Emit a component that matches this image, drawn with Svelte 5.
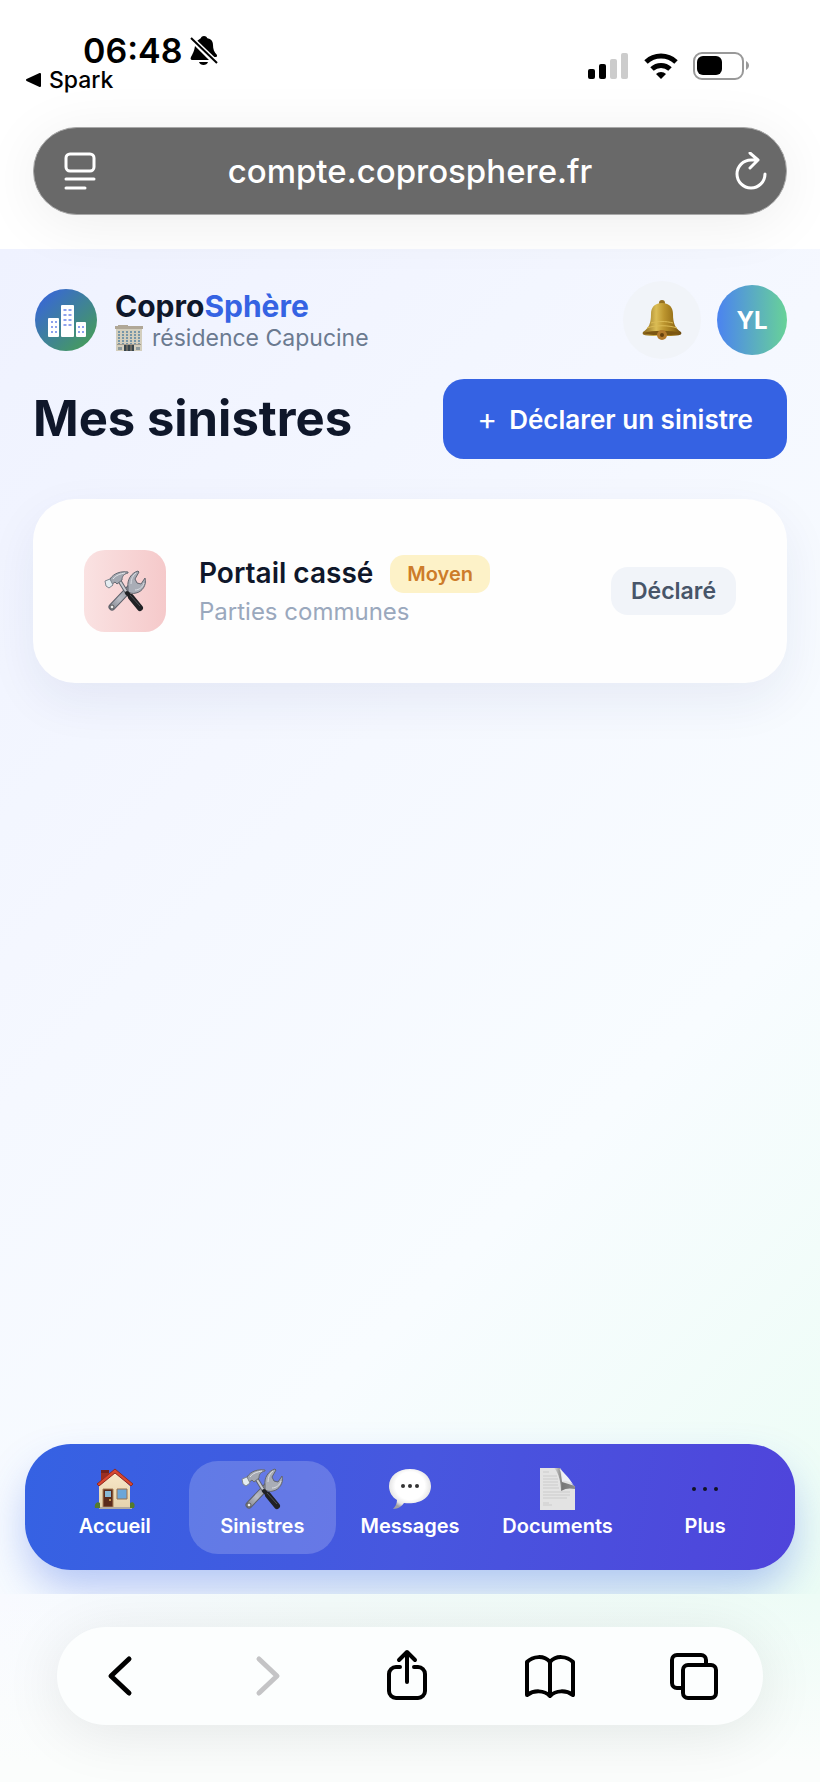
<script lang="ts">
    type Tab = { id: string; label: string };

    const tabs: Tab[] = [
        { id: 'accueil', label: 'Accueil' },
        { id: 'sinistres', label: 'Sinistres' },
        { id: 'messages', label: 'Messages' },
        { id: 'documents', label: 'Documents' },
        { id: 'plus', label: 'Plus' }
    ];

    const sinistres = [
        { titre: 'Portail cassé', lieu: 'Parties communes', gravite: 'Moyen', statut: 'Déclaré' }
    ];

    let active = $state('sinistres');
</script>

{#snippet tools()}
    <svg class="emoji" viewBox="0 0 42 42" aria-hidden="true">
        <!-- wrench -->
        <path d="M8 37 27 17" stroke="#5d606a" stroke-width="7" stroke-linecap="round" />
        <path d="M8 37 27 17" stroke="url(#steel)" stroke-width="5" stroke-linecap="round" />
        <path d="M24 17c-1-7 3-14 10-16l1 1-4 7 2 4 4 1 4-6c2 7-3 14-9 15-3 1-6 0-8-1z" fill="#a9adb6" stroke="#62656e" stroke-width="1" />
        <path d="M27 14c0-5 2-9 5-11M31 20c4 0 8-3 9-7" stroke="#dadde2" stroke-width="1" />
        <circle cx="8" cy="37" r="2" fill="#eee" stroke="#555" />
        <!-- hammer -->
        <path d="m15 10 8 13" stroke="#5f636c" stroke-width="4" />
        <path d="m15 10 8 13" stroke="#c9ccd2" stroke-width="2" />
        <path d="m23 23 3 3" stroke="#202124" stroke-width="4" stroke-linecap="round" />
        <path d="m27 27 9 11" stroke="#202124" stroke-width="6" stroke-linecap="round" />
        <path d="m26 25 10 11" stroke="#4e5054" stroke-width="1" />
        <path d="M6 9c4-6 11-8 18-7v1c-4 1-6 3-6 7l-5 4-2-2-4 3z" fill="#a4a8b1" stroke="#656972" stroke-width="1" />
        <path d="M9 9c3-4 7-5 12-6" stroke="#e4e6ea" stroke-width="1" />
        <path d="m1 11 5-2 3 6-4 3-3-2z" fill="#e4ecf0" stroke="#7e868f" />
    </svg>
{/snippet}

{#snippet tabIcon(id: string)}
    {#if id === 'accueil'}
        <svg class="emoji" viewBox="0 0 42 42" aria-hidden="true">
            <path d="M7 3h8v12H7z" fill="#9b2f22" />
            <path d="M7 2h8v3H7z" fill="#74231c" />
            <path d="M5 18 21 4l15 14v22H5z" fill="url(#wall)" />
            <path d="M3 16 21 1l18 15-2 2L21 5 5 18z" fill="#d9482f" stroke="#912a22" stroke-width="1" />
            <path d="M9 21h10v18H9z" fill="#5b2b1c" stroke="#a87e55" />
            <path d="M11 23h6v6h-6z" fill="#88b9d6" />
            <circle cx="16" cy="32" r="1" fill="#e4b65a" />
            <path d="M23 21h10v10H23z" fill="#6ba6d9" stroke="#98704d" stroke-width="1" />
            <path d="M5 39h33v2H5z" fill="#b2aba0" />
            <path d="M1 40c-1-5 3-7 5-5v5zM36 40v-5c3-2 6 1 4 5z" fill="#557b2d" />
        </svg>
    {:else if id === 'sinistres'}
        {@render tools()}
    {:else if id === 'messages'}
        <svg class="emoji" viewBox="0 0 42 42" aria-hidden="true">
            <path d="M21 1C9 1 0 8 0 18c0 6 3 11 8 14 0 4-2 7-4 9 5 0 9-3 11-6 15 2 27-5 27-17C42 8 33 1 21 1z" fill="url(#bubble)" />
            <g fill="#333">
                <circle cx="14" cy="18" r="2" />
                <circle cx="21" cy="18" r="2" />
                <circle cx="28" cy="18" r="2" />
            </g>
        </svg>
    {:else if id === 'documents'}
        <svg class="emoji" viewBox="0 0 42 42" aria-hidden="true">
            <path d="M3 0h20l15 20v22H3z" fill="#e3e3e3" />
            <path d="M6 4h6M6 8h14M6 11h15M6 14h15M6 17h15M6 20h16M6 24h27M6 27h27M6 30h24M6 35h6M6 37h9" stroke="#cbcbcb" />
            <path d="M17 0h6l2 14 13 4v3c-5-1-9-1-14 2 0-8-2-18-7-23z" fill="url(#fold)" />
            <path d="M22 1c3 3 4 7 3 12 5-1 10 1 13 7C34 12 28 5 22 1z" fill="#eef0f6" />
        </svg>
    {:else}
        <svg class="emoji" viewBox="0 0 42 42" aria-hidden="true">
            <g fill="#101223">
                <circle cx="10" cy="21" r="2" />
                <circle cx="21" cy="21" r="2" />
                <circle cx="32" cy="21" r="2" />
            </g>
        </svg>
    {/if}
{/snippet}

<svg class="defs" width="0" height="0" aria-hidden="true">
    <defs>
        <linearGradient id="steel" x1="0" y1="1" x2="1" y2="0">
            <stop offset="0" stop-color="#8c8f98" />
            <stop offset="0.400" stop-color="#b9bcc4" />
            <stop offset="1" stop-color="#8f929b" />
        </linearGradient>
        <linearGradient id="wall" x1="0" y1="0" x2="0" y2="1">
            <stop offset="0" stop-color="#f8e8c8" />
            <stop offset="1" stop-color="#e5d3ae" />
        </linearGradient>
        <radialGradient id="bubble" cx="0.500" cy="0.420" r="0.580">
            <stop offset="0.600" stop-color="#fff" />
            <stop offset="0.850" stop-color="#e6e6e6" />
            <stop offset="1" stop-color="#a0a0a4" />
        </radialGradient>
        <linearGradient id="fold" x1="0" y1="0" x2="1" y2="0">
            <stop offset="0" stop-color="#dcdcdc" />
            <stop offset="0.400" stop-color="#777" />
            <stop offset="1" stop-color="#8d8d8d" />
        </linearGradient>
        <linearGradient id="gold" x1="0" y1="0" x2="1" y2="0">
            <stop offset="0" stop-color="#87641a" />
            <stop offset="0.350" stop-color="#dbbd55" />
            <stop offset="0.550" stop-color="#bd962f" />
            <stop offset="0.800" stop-color="#987119" />
            <stop offset="1" stop-color="#684710" />
        </linearGradient>
        <linearGradient id="logo" x1="0" y1="0" x2="1" y2="1">
            <stop offset="0.100" stop-color="#3867d6" />
            <stop offset="0.900" stop-color="#469c5b" />
        </linearGradient>
    </defs>
</svg>

<div class="phone">
    <header class="browser-top">
        <div class="status">
            <div class="status-left">
                <div class="clock">
                    <time>06:48</time>
                    <svg width="28" height="30" viewBox="0 0 28 30" role="img" aria-label="Silencieux">
                        <path d="M14 0c-2 0-3 1-3 2L7 5l16 16h3c1 0 1-1 1-2-3-3-4-6-4-10 0-5-3-6-6-7 0-1-1-2-3-2z" />
                        <path d="M5 10c-1 6-2 7-4 11-1 2 0 3 1 3h17zM9 26h9c-1 4-8 4-9 0z" />
                        <path d="m1 2 26 25" fill="none" stroke="#fff" stroke-width="5" />
                        <path d="m1 2 26 25" fill="none" stroke="#000" stroke-width="2" />
                    </svg>
                </div>
                <a class="back-app" href="#spark">
                    <svg width="16" height="16" viewBox="0 0 16 16" aria-hidden="true"><path d="m1 8 13-6v12z" stroke="#000" stroke-width="2" stroke-linejoin="round" /></svg>
                    Spark
                </a>
            </div>
            <div class="status-right">
                <svg width="41" height="26" viewBox="0 0 41 26" role="img" aria-label="Réseau">
                    <rect y="16" width="7" height="10" rx="2" />
                    <rect x="11" y="11" width="7" height="15" rx="2" />
                    <rect x="22" y="6" width="7" height="20" rx="2" fill="#ccc" />
                    <rect x="33" width="7" height="26" rx="2" fill="#ccc" />
                </svg>
                <svg width="34" height="26" viewBox="0 0 34 26" role="img" aria-label="Wi-Fi">
                    <path d="M2 9a22 22 0 0 1 30 0M8 16a13 13 0 0 1 18 0" fill="none" stroke="#000" stroke-width="5" />
                    <path d="M17 26l-5-5a7 7 0 0 1 10 0z" />
                </svg>
                <svg width="56" height="28" viewBox="0 0 56 28" role="img" aria-label="Batterie">
                    <rect x="1" y="1" width="49" height="26" rx="8" fill="none" stroke="#999" stroke-width="2" />
                    <rect x="4" y="4" width="25" height="19" rx="6" />
                    <path d="M53 9c4 2 4 7 0 9z" fill="#999" />
                </svg>
            </div>
        </div>

        <div class="url-bar">
            <button class="url-icon" aria-label="Mise en page">
                <svg width="32" height="38" viewBox="0 0 32 38" fill="none" stroke="#fff" stroke-width="3" stroke-linecap="round">
                    <rect x="2" y="2" width="28" height="17" rx="4" />
                    <path d="M2 27h28M2 36h19" />
                </svg>
            </button>
            <button class="url">compte.coprosphere.fr</button>
            <button class="url-icon reload" aria-label="Actualiser">
                <svg width="32" height="38" viewBox="0 0 32 38" fill="none" stroke="#fff" stroke-width="3" stroke-linecap="round" stroke-linejoin="round">
                    <path d="M30 22a14 14 0 1 1-14-14h7M15 1l8 7-8 8" />
                </svg>
            </button>
        </div>
    </header>

    <div class="app">
        <header class="app-header">
            <svg class="logo" viewBox="0 0 62 62" role="img" aria-label="CoproSphère">
                <circle cx="31" cy="31" r="31" fill="url(#logo)" />
                <g fill="#fff">
                    <rect x="13" y="29" width="11" height="19" rx="1" />
                    <rect x="26" y="16" width="13" height="32" rx="1" />
                    <rect x="41" y="33" width="10" height="15" rx="1" />
                </g>
                <g stroke="#8da2ee" stroke-width="2" stroke-dasharray="2 3">
                    <path d="M17 32v13M21 32v13" />
                    <path d="M30 20v18M35 20v18" stroke-width="3" />
                    <path d="M44 37v8M48 37v8" />
                </g>
            </svg>
            <div class="brand">
                <div class="brand-name">Copro<span>Sphère</span></div>
                <div class="residence">
                    <svg width="28" height="26" viewBox="0 0 28 26" aria-hidden="true">
                        <path d="M1 2h26v24H1z" fill="#d3cebd" />
                        <path d="M3 0h10v2H3zM0 1h28v3H0z" fill="#b0a797" />
                        <path d="M4 6v13M8 6v13M12 6v13M16 6v13M20 6v13M24 6v13" stroke="#7796a8" stroke-width="2" stroke-dasharray="2 1" />
                        <path d="M2 19h24v1H2z" fill="#a29c8f" />
                        <path d="M9 20h10v6H9z" fill="#37464d" />
                        <path d="M12 20v6M16 20v6" stroke="#a18c74" />
                        <path d="M3 22h4v3H3zM21 22h4v3h-4z" fill="#8d9a9d" />
                    </svg>
                    résidence Capucine
                </div>
            </div>
            <button class="bell" aria-label="Notifications">
                <svg width="40" height="40" viewBox="0 0 40 40" aria-hidden="true">
                    <circle cx="20" cy="3" r="3" fill="#957021" />
                    <path d="M20 3c-8 0-11 5-11 11 0 9-2 14-8 18-2 4 4 4 19 4s21 0 19-4c-6-4-8-9-8-18C31 8 28 3 20 3z" fill="url(#gold)" />
                    <path d="M5 28c8-3 22-3 30 0M9 23c7-2 15-2 22 0" fill="none" stroke="#dcbb55" />
                    <path d="M1 33c10-3 28-3 38 0-5 3-32 3-38 0z" fill="#7c5612" />
                    <circle cx="20" cy="35" r="5" fill="#b37a2c" />
                    <circle cx="20" cy="35" r="2" fill="#66400f" />
                </svg>
            </button>
            <button class="avatar">YL</button>
        </header>

        <main>
            <div class="title-row">
                <h1>Mes sinistres</h1>
                <button class="declare"><span>+</span>Déclarer un sinistre</button>
            </div>

            {#each sinistres as s}
                <article class="card">
                    <div class="card-icon">{@render tools()}</div>
                    <div class="card-body">
                        <div class="card-title">
                            <h2>{s.titre}</h2>
                            <span class="severity">{s.gravite}</span>
                        </div>
                        <p>{s.lieu}</p>
                    </div>
                    <span class="state">{s.statut}</span>
                </article>
            {/each}
        </main>

        <nav class="tabs">
            {#each tabs as tab}
                <a href="#{tab.id}" class:active={active === tab.id} onclick={() => (active = tab.id)}>
                    {@render tabIcon(tab.id)}
                    {tab.label}
                </a>
            {/each}
        </nav>
    </div>

    <footer class="browser-bottom">
        <div class="toolbar">
            <button aria-label="Précédent">
                <svg viewBox="0 0 48 50"><path d="M33 8 15 25l18 17" stroke-width="5" /></svg>
            </button>
            <button aria-label="Suivant" disabled>
                <svg viewBox="0 0 48 50"><path d="m20 8 18 17-18 17" stroke-width="5" /></svg>
            </button>
            <button aria-label="Partager">
                <svg viewBox="0 0 48 50"><path d="M17 16h-4a7 7 0 0 0-7 7v17a7 7 0 0 0 7 7h22a7 7 0 0 0 7-7V23a7 7 0 0 0-7-7h-4M24 31V2M16 9l8-8 8 8" /></svg>
            </button>
            <button aria-label="Signets">
                <svg viewBox="0 0 48 50"><path d="M24 11C18 4 7 5 1 11v33c7-5 17-5 23 1 6-6 16-6 23-1V11C41 5 30 4 24 11zM24 11v34" /></svg>
            </button>
            <button aria-label="Onglets">
                <svg viewBox="0 0 48 50"><path d="M12 37H8a5 5 0 0 1-5-5V9a5 5 0 0 1 5-5h24a5 5 0 0 1 5 5v4" /><rect x="14" y="14" width="33" height="33" rx="5" /></svg>
            </button>
        </div>
    </footer>
</div>

<style>
    :global(body){
        margin:0;
        background:#fff;
    }

    .phone{
        min-height:100vh;
        display:flex;
        flex-direction:column;
        font-family:Inter, "Liberation Sans", sans-serif;
        color:#0f172a;
    }

    button{
        font:inherit;
        color:inherit;
        border:none;
        background:none;
        padding:0;
        cursor:pointer;
    }

    a{
        color:inherit;
        text-decoration:none;
    }

    svg{
        display:block;
        flex:none;
    }

    .defs{
        position:absolute;
    }

    /* browser chrome, top */
    .browser-top{
        position:relative;
        z-index:1;
        padding:34px 33px;
    }

    .status{
        display:flex;
        justify-content:space-between;
        align-items:flex-start;
        margin-bottom:35px;
        color:#000;
    }

    .clock{
        display:flex;
        align-items:center;
        gap:8px;
        padding-left:50px;
        font-size:34px;
        line-height:34px;
        font-weight:600;
    }

    .back-app{
        display:flex;
        align-items:center;
        gap:7px;
        margin-left:-7px;
        font-size:23px;
        line-height:24px;
        font-weight:500;
    }

    .status-right{
        display:flex;
        align-items:center;
        gap:15px;
        padding:18px 38px 0 0;
    }

    .url-bar{
        display:grid;
        grid-template-columns:1fr auto 1fr;
        align-items:center;
        height:88px;
        box-sizing:border-box;
        padding:0 19px;
        border:1px solid #a8a8a8;
        border-radius:44px;
        background:#696969;
        color:#fff;
        box-shadow:0 8px 60px rgba(0,0,0,0.07);
    }

    .url{
        font-size:33px;
        line-height:40px;
        font-weight:500;
    }

    .url-icon{
        justify-self:start;
        margin-left:11px;
    }

    .url-icon.reload{
        justify-self:end;
        margin-left:0;
    }

    /* web page */
    .app{
        flex:1;
        display:flex;
        flex-direction:column;
        overflow:hidden;
        padding:32px 33px 24px;
        background:linear-gradient(135deg, #eff2ff 0%, #f5f8ff 40%, #f8fcff 68%, #ecfdf5 100%);
    }

    .app-header{
        display:flex;
        align-items:center;
        height:78px;
        margin-bottom:20px;
    }

    .logo{
        width:62px;
        margin:0 18px 0 2px;
    }

    .brand{
        flex:1;
    }

    .brand-name{
        font-size:30px;
        line-height:36px;
        font-weight:700;
    }

    .brand-name span{
        color:#3563e3;
    }

    .residence{
        display:flex;
        align-items:center;
        gap:9px;
        font-size:23px;
        line-height:28px;
        color:#6b7a90;
    }

    .bell{
        display:grid;
        place-items:center;
        width:78px;
        height:78px;
        margin-right:16px;
        border-radius:50%;
        background:#f1f4f9;
    }

    .avatar{
        width:70px;
        height:70px;
        border-radius:50%;
        background:linear-gradient(90deg, #4b83f0, #68d298);
        color:#fff;
        font-size:24px;
        font-weight:700;
    }

    .title-row{
        display:flex;
        align-items:center;
        justify-content:space-between;
        margin-bottom:40px;
    }

    h1{
        margin:0;
        font-size:49px;
        line-height:60px;
        font-weight:700;
    }

    .declare{
        display:flex;
        align-items:center;
        gap:12px;
        height:80px;
        padding:0 34px;
        border-radius:21px;
        background:#3562e3;
        color:#fff;
        font-size:26px;
        font-weight:600;
    }

    .declare span{
        font-size:30px;
        font-weight:400;
    }

    .card{
        display:flex;
        align-items:center;
        gap:33px;
        padding:51px;
        border-radius:42px;
        background:#fefefe;
        box-shadow:0 18px 50px rgba(30,41,120,0.07);
    }

    .card-icon{
        display:grid;
        place-items:center;
        width:82px;
        height:82px;
        border-radius:21px;
        background:linear-gradient(90deg, #fae2e2, #f5c9ca);
    }

    .emoji{
        width:42px;
        height:42px;
        fill:none;
    }

    .card-body{
        flex:1;
    }

    .card-title{
        display:flex;
        align-items:flex-start;
        gap:17px;
    }

    h2{
        margin:0;
        font-size:28px;
        line-height:36px;
        font-weight:600;
    }

    .severity{
        padding:6px 17px;
        border-radius:14px;
        background:#fdf2c8;
        color:#cd7c2a;
        font-size:20px;
        line-height:26px;
        font-weight:600;
    }

    .card p{
        margin:4px 0 0;
        color:#9aa8bd;
        font-size:24px;
        line-height:30px;
    }

    .state{
        padding:10px 20px;
        border-radius:17px;
        background:#f1f4f9;
        color:#475569;
        font-size:23px;
        line-height:28px;
        font-weight:600;
    }

    .tabs{
        display:flex;
        margin:auto -8px 0;
        padding:17px 16px 16px;
        border-radius:46px;
        background:linear-gradient(100deg, #3562e3, #4757df 50%, #4f44db);
        box-shadow:0 22px 44px -4px rgba(53,98,227,0.36);
        color:#fff;
    }

    .tabs a{
        flex:1 1 0;
        display:flex;
        flex-direction:column;
        align-items:center;
        gap:4px;
        padding:7px 0 15px;
        border-radius:29px;
        font-size:20px;
        line-height:25px;
        font-weight:600;
    }

    .tabs a.active{
        background:rgba(255,255,255,0.19);
    }

    /* browser chrome, bottom */
    .browser-bottom{
        padding:33px 57px 57px;
        background:linear-gradient(rgba(251,253,252,0), #fbfdfc 90%), linear-gradient(90deg, #f8faff, #f3fbfa 40%, #edfcf6);
    }

    .toolbar{
        display:flex;
        align-items:center;
        justify-content:space-between;
        height:98px;
        padding:0 46px 0 39px;
        border-radius:49px;
        background:#fcfefe;
        box-shadow:0 8px 60px rgba(0,0,0,0.09);
    }

    .toolbar svg{
        width:48px;
        height:50px;
        fill:none;
        stroke:#000;
        stroke-width:4;
        stroke-linecap:round;
        stroke-linejoin:round;
        overflow:visible;
    }

    .toolbar button:disabled svg{
        stroke:#c4c4c6;
    }
</style>
